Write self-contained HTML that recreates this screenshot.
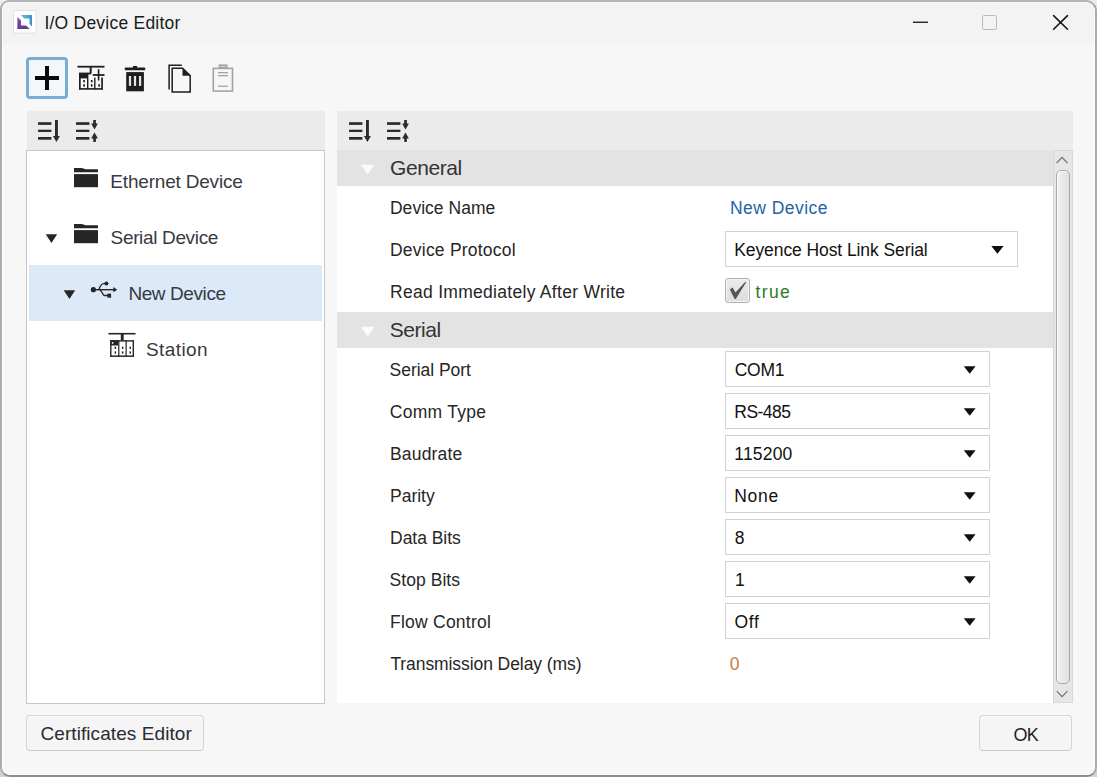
<!DOCTYPE html>
<html><head><meta charset="utf-8">
<style>
html,body{margin:0;padding:0;}
body{width:1097px;height:777px;position:relative;overflow:hidden;background:#d2d2d2;font-family:"Liberation Sans",sans-serif;}
.a{position:absolute;}
.t{position:absolute;white-space:nowrap;line-height:20px;font-size:17.5px;color:#262626;}
.tr{position:absolute;white-space:nowrap;line-height:20px;font-size:19px;color:#363a42;}
.dd{position:absolute;box-sizing:border-box;height:36px;border:1px solid #d2d2d2;background:#fff;}
</style></head><body>
<!-- window frame -->
<div class="a" style="left:0;top:0;width:12px;height:12px;background:#efefef"></div>
<div class="a" style="left:1083px;top:0;width:14px;height:14px;background:#ededed"></div>
<div class="a" style="left:0;top:0;width:1097px;height:777px;box-sizing:border-box;border-style:solid;border-width:2px;border-color:#b5b5b5 #a9a9a9 #8c8c8c #adadad;border-radius:9px 11px 10px 10px;background:#f7f7f7;overflow:hidden;">
  <div class="a" style="left:0;top:0;right:0;bottom:0;border-style:solid;border-width:1px 1px 1px 1px;border-color:#f8f8f8 #fdfdfd #fff #fff;border-radius:7px 9px 8px 8px;"></div>
  <div class="a" style="left:1px;top:1px;width:1091px;height:41px;background:#f3f3f3;border-radius:6px 8px 0 0"></div>
</div>

<!-- panel backgrounds -->
<div class="a" style="left:27px;top:111px;width:298px;height:39px;background:#ebebeb"></div>
<div class="a" style="left:26px;top:150px;width:299px;height:554px;box-sizing:border-box;border:1px solid #c6c6c6;background:#fff"></div>
<div class="a" style="left:29px;top:265px;width:293px;height:56px;background:#dbe9f9"></div>

<div class="a" style="left:337px;top:111px;width:736px;height:39px;background:#ebebeb"></div>
<div class="a" style="left:337px;top:150px;width:716px;height:553px;background:#fff"></div>
<div class="a" style="left:337px;top:150px;width:716px;height:36px;background:#e3e3e3"></div>
<div class="a" style="left:337px;top:312px;width:716px;height:36px;background:#e3e3e3"></div>

<!-- scrollbar -->
<div class="a" style="left:1053px;top:150px;width:20px;height:553px;box-sizing:border-box;background:#e6e6e6;border:1px solid #d8d8d8"></div>
<div class="a" style="left:1056px;top:170px;width:14px;height:514px;box-sizing:border-box;border:1px solid #a9a9a9;border-radius:5px;background:linear-gradient(90deg,#f2f2f2,#e0e0e0);box-shadow:inset 1px 1px 0 #fcfcfc"></div>

<!-- dropdowns -->
<div class="dd" style="left:725px;top:231px;width:293px"></div>
<div class="dd" style="left:725px;top:351px;width:265px"></div>
<div class="dd" style="left:725px;top:393px;width:265px"></div>
<div class="dd" style="left:725px;top:435px;width:265px"></div>
<div class="dd" style="left:725px;top:477px;width:265px"></div>
<div class="dd" style="left:725px;top:519px;width:265px"></div>
<div class="dd" style="left:725px;top:561px;width:265px"></div>
<div class="dd" style="left:725px;top:603px;width:265px"></div>

<!-- checkbox -->
<div class="a" style="left:725px;top:278px;width:25px;height:25px;box-sizing:border-box;border:1px solid #b0b0b0;border-radius:3px;background:linear-gradient(#ececec,#dcdcdc);box-shadow:inset 0 0 0 1px #f6f6f6"></div>

<!-- buttons -->
<div class="a" style="left:26px;top:715px;width:178px;height:36px;box-sizing:border-box;border:1px solid #d5d5d5;border-bottom-color:#cbcbcb;border-radius:4px;background:#f5f5f5;box-shadow:inset 0 1px 0 #fbfbfb"></div>
<div class="a" style="left:979px;top:715px;width:93px;height:36px;box-sizing:border-box;border:1px solid #d5d5d5;border-bottom-color:#cbcbcb;border-radius:4px;background:#f5f5f5;box-shadow:inset 0 1px 0 #fbfbfb"></div>

<!-- toolbar + button -->
<div class="a" style="left:26px;top:57px;width:42px;height:42px;box-sizing:border-box;border:3px solid #78acd4;border-radius:4px;background:#f4f7fa"></div>

<svg class="a" style="left:0;top:0" width="1097" height="777">
  <defs>
    <linearGradient id="gp" x1="0" y1="0" x2="0" y2="1"><stop offset="0" stop-color="#8a4fb0"/><stop offset="1" stop-color="#5b3d8f"/></linearGradient>
    <linearGradient id="gb" x1="0" y1="0" x2="1" y2="0"><stop offset="0" stop-color="#5fc3e4"/><stop offset="1" stop-color="#3a8fc8"/></linearGradient>
  </defs>
  <!-- app icon -->
  <rect x="13.5" y="10.5" width="22.6" height="22.6" rx="2" fill="#fff" stroke="#e0e0e0"/>
  <path d="M17.4,17 L21,20.5 L21,25.5 L26,25.5 L29.8,29 L17.4,29 Z" fill="url(#gp)"/>
  <path d="M20.8,15 L32,15 L32,26.5 L29.5,24 L29.5,18.5 L24.3,18.5 Z" fill="url(#gb)"/>
  <!-- window controls -->
  <rect x="913" y="21.6" width="15" height="1.3" fill="#111"/>
  <rect x="982.5" y="15.5" width="14" height="14" rx="2" fill="none" stroke="#b9b9b9"/>
  <path d="M1053.6,15.6 L1067.5,29.2 M1067.5,15.6 L1053.6,29.2" stroke="#111" stroke-width="1.5" stroke-linecap="round"/>

  <!-- plus -->
  <rect x="35" y="76" width="24" height="4" fill="#0a0a0a"/>
  <rect x="45" y="66" width="4" height="24" fill="#0a0a0a"/>

  <!-- station add -->
  <g fill="#1e1e1e">
    <rect x="77.5" y="65.8" width="27" height="1.8"/>
    <rect x="89.7" y="66.5" width="2" height="6.5"/>
    <rect x="79" y="72.6" width="12.2" height="1.8"/>
    <rect x="79" y="73.5" width="8.5" height="4.9"/>
    <rect x="79" y="73" width="1.7" height="16.6"/>
    <rect x="79" y="88.1" width="23.8" height="1.6"/>
    <rect x="101.2" y="77.5" width="1.7" height="12"/>
    <rect x="87" y="73.5" width="1.4" height="15.5"/>
    <rect x="94.1" y="77.6" width="1.4" height="11.5"/>
    <rect x="92.7" y="74.1" width="11.8" height="1.8"/>
    <rect x="97.8" y="69.2" width="1.6" height="11.3"/>
    <rect x="83.3" y="80" width="1.6" height="2.3"/>
    <rect x="83.3" y="84.2" width="1.6" height="2.5"/>
    <rect x="90.9" y="80" width="1.6" height="2.3"/>
    <rect x="90.9" y="84.2" width="1.6" height="2.5"/>
    <rect x="98.3" y="84.2" width="1.6" height="2.5"/>
  </g>

  <!-- trash -->
  <g fill="#1e1e1e">
    <rect x="133" y="66" width="4.1" height="2"/>
    <rect x="124.7" y="67.6" width="20.6" height="2.6" rx="1"/>
    <rect x="126.2" y="72.1" width="17.7" height="19.2"/>
  </g>
  <g fill="#e6e6e6">
    <rect x="128.9" y="76" width="2.2" height="9.9"/>
    <rect x="133.9" y="76" width="2.2" height="9.9"/>
    <rect x="139" y="76" width="2.2" height="9.9"/>
  </g>

  <!-- copy -->
  <g fill="none" stroke="#1e1e1e" stroke-width="1.5">
    <path d="M169.1,89.6 L169.1,65.2 L181.8,65.2"/>
    <path d="M182.6,68.3 L172.2,68.3 L172.2,91.9 L190.2,91.9 L190.2,75.6 Z"/>
  </g>
  <path d="M182.5,68.3 L182.5,75.8 L190.2,75.8 Z" fill="#1e1e1e"/>

  <!-- paste disabled -->
  <g fill="none" stroke="#a3a3a3" stroke-width="1.6">
    <rect x="213.3" y="68.4" width="19.2" height="22.7"/>
    <rect x="219.5" y="65.2" width="7.3" height="2.2"/>
  </g>
  <g fill="#a3a3a3">
    <rect x="218" y="72" width="10" height="1.3"/>
    <rect x="218" y="75" width="10" height="1.3"/>
    <rect x="218" y="85.6" width="10" height="1.3"/>
  </g>

  <!-- sort icons left -->
  <g fill="#2b2b2b" id="sorticons">
    <rect x="38.05" y="122.2" width="13.35" height="2.7"/>
    <rect x="38.05" y="129.7" width="13.35" height="2.3"/>
    <rect x="38.05" y="137" width="13.35" height="2.7"/>
    <rect x="55" y="120" width="2.9" height="17"/>
    <path d="M52.9,136.1 L59.9,136.1 L56.45,141.9 Z"/>
    <rect x="76.05" y="122.2" width="13.35" height="2.7"/>
    <rect x="76.05" y="129.7" width="13.35" height="2.3"/>
    <rect x="76.05" y="137" width="13.35" height="2.7"/>
    <rect x="93.2" y="120" width="2.7" height="4.5"/>
    <path d="M91.1,123.5 L97.9,123.5 L94.5,129.5 Z"/>
    <path d="M91.1,138.6 L97.9,138.6 L94.5,132.4 Z"/>
    <rect x="93.2" y="138" width="2.7" height="3.9"/>
  </g>
  <use href="#sorticons" x="311" y="0"/>

  <!-- group triangles -->
  <path d="M360.8,164.8 L374.5,164.8 L367.7,174.5 Z" fill="#fbfbfb"/>
  <path d="M360.8,326.8 L374.5,326.8 L367.7,336.5 Z" fill="#fbfbfb"/>

  <!-- tree icons -->
  <g fill="#262626">
    <path d="M74,168 L81.6,168 L86,169.2 L98,169.2 L98,172.2 L74,172.2 Z"/>
    <rect x="74" y="174.1" width="24" height="13.1"/>
    <path d="M74,224 L81.6,224 L86,225.2 L98,225.2 L98,228.2 L74,228.2 Z"/>
    <rect x="74" y="230.1" width="24" height="13.1"/>
    <path d="M45.7,234.3 L57.2,234.3 L51.45,243 Z"/>
    <path d="M63.7,290.3 L75.2,290.3 L69.45,299 Z"/>
  </g>
  <!-- usb -->
  <g fill="#262626" stroke="#262626">
    <circle cx="93.4" cy="289.7" r="2.6" stroke="none"/>
    <path d="M93.4,289.7 L114,289.7" stroke-width="1.4" fill="none"/>
    <path d="M113.3,287 L117.3,289.7 L113.3,292.2 Z" stroke="none"/>
    <path d="M98.8,289.7 Q101,283.6 103.5,283.6 L106,283.6" stroke-width="1.3" fill="none"/>
    <circle cx="106.4" cy="283.5" r="2" stroke="none"/>
    <path d="M100,289.7 L104,295.5 L108,295.5" stroke-width="1.3" fill="none"/>
    <rect x="107.4" y="293.6" width="3.7" height="4.1" stroke="none"/>
  </g>
  <!-- station -->
  <g fill="#262626">
    <rect x="108.4" y="332.9" width="27.1" height="1.6"/>
    <rect x="120.8" y="334" width="2.9" height="6.7"/>
    <rect x="110.1" y="340.2" width="23.9" height="1.4"/>
    <rect x="110.1" y="355.4" width="23.9" height="1.5"/>
    <rect x="110.1" y="340.2" width="1.4" height="16.7"/>
    <rect x="132.6" y="340.2" width="1.4" height="16.7"/>
    <rect x="118.2" y="340.2" width="1.2" height="16.7"/>
    <rect x="125.5" y="340.2" width="1.2" height="16.7"/>
    <path d="M110.1,340.2 L118.3,340.2 L118.3,345.5 L110.1,345.5 Z M111.7,342 L111.7,343.7 L113.3,343.7 L113.3,342 Z" fill-rule="evenodd"/>
    <rect x="114.6" y="346.7" width="1.5" height="2.2"/>
    <rect x="114.6" y="351.4" width="1.5" height="2.2"/>
    <rect x="121.9" y="346.7" width="1.5" height="2.2"/>
    <rect x="121.9" y="351.4" width="1.5" height="2.2"/>
    <rect x="129.5" y="346.7" width="1.5" height="2.2"/>
    <rect x="129.5" y="351.4" width="1.5" height="2.2"/>
  </g>

  <!-- scrollbar arrows -->
  <path d="M1056.6,163 L1062,157.4 L1067.4,163" fill="none" stroke="#707070" stroke-width="1.15"/>
  <path d="M1056.8,691.2 L1062.1,696.6 L1067.4,691.2" fill="none" stroke="#707070" stroke-width="1.15"/>

  <!-- dropdown arrows -->
  <g fill="#0f0f0f">
    <path d="M991.3,246 L1003.6,246 L997.45,253.8 Z"/>
    <path d="M963.8,366.2 L975.6,366.2 L969.7,373.8 Z"/>
    <path d="M963.8,408.2 L975.6,408.2 L969.7,415.8 Z"/>
    <path d="M963.8,450.2 L975.6,450.2 L969.7,457.8 Z"/>
    <path d="M963.8,492.2 L975.6,492.2 L969.7,499.8 Z"/>
    <path d="M963.8,534.2 L975.6,534.2 L969.7,541.8 Z"/>
    <path d="M963.8,576.2 L975.6,576.2 L969.7,583.8 Z"/>
    <path d="M963.8,618.2 L975.6,618.2 L969.7,625.8 Z"/>
  </g>
  <!-- checkmark -->
  <path d="M729.8,289.6 L732.6,287.6 L735.5,292.6 L745.6,281.4 L746,282.4 L735.8,298.9 L734.6,298.9 Z" fill="#555"/>
</svg>

<!-- texts -->
<div id="x1" class="t" style="left:44.45px;top:12.71px;color:#1a1a1a;letter-spacing:0.227px">I/O Device Editor</div>

<div id="x2" class="tr" style="left:110.36px;top:172.00px;letter-spacing:-0.197px">Ethernet Device</div>
<div id="x3" class="tr" style="left:110.59px;top:228.00px;letter-spacing:-0.346px">Serial Device</div>
<div id="x4" class="tr" style="left:128.39px;top:284.00px;letter-spacing:-0.410px">New Device</div>
<div id="x5" class="tr" style="left:146.04px;top:340.01px;letter-spacing:0.393px">Station</div>

<div id="x6" class="t" style="left:390.05px;top:156.00px;font-size:21px;line-height:24px;color:#333333;letter-spacing:-0.424px">General</div>
<div id="x7" class="t" style="left:389.73px;top:317.50px;font-size:21px;line-height:24px;color:#333333;letter-spacing:-0.468px">Serial</div>

<div id="x8" class="t" style="left:389.94px;top:198.00px;letter-spacing:0.035px">Device Name</div>
<div id="x9" class="t" style="left:390.02px;top:240.00px;letter-spacing:0.216px">Device Protocol</div>
<div id="x10" class="t" style="left:390.07px;top:282.00px;letter-spacing:0.287px">Read Immediately After Write</div>
<div id="x11" class="t" style="left:389.61px;top:360.00px;letter-spacing:-0.046px">Serial Port</div>
<div id="x12" class="t" style="left:389.73px;top:402.00px;letter-spacing:0.271px">Comm Type</div>
<div id="x13" class="t" style="left:390.02px;top:444.00px;letter-spacing:0.160px">Baudrate</div>
<div id="x14" class="t" style="left:390.02px;top:486.00px;letter-spacing:-0.014px">Parity</div>
<div id="x15" class="t" style="left:390.02px;top:528.00px;letter-spacing:-0.027px">Data Bits</div>
<div id="x16" class="t" style="left:389.61px;top:570.00px;letter-spacing:0.043px">Stop Bits</div>
<div id="x17" class="t" style="left:390.02px;top:612.00px;letter-spacing:0.236px">Flow Control</div>
<div id="x18" class="t" style="left:390.38px;top:654.00px;letter-spacing:-0.079px">Transmission Delay (ms)</div>

<div id="x19" class="t" style="left:730.00px;top:198.00px;color:#1f63a6;letter-spacing:0.457px">New Device</div>
<div id="x20" class="t" style="left:734.23px;top:240.00px;color:#111;letter-spacing:-0.088px">Keyence Host Link Serial</div>
<div id="x21" class="t" style="left:755.40px;top:281.50px;color:#2e7a27;letter-spacing:1.418px">true</div>
<div id="x22" class="t" style="left:734.73px;top:360.00px;color:#111;letter-spacing:-0.291px">COM1</div>
<div id="x23" class="t" style="left:734.29px;top:402.00px;color:#111;letter-spacing:-0.544px">RS-485</div>
<div id="x24" class="t" style="left:734.32px;top:444.00px;color:#111;letter-spacing:0.181px">115200</div>
<div id="x25" class="t" style="left:734.29px;top:486.00px;color:#111;letter-spacing:0.675px">None</div>
<div id="x26" class="t" style="left:734.87px;top:528.00px;color:#111">8</div>
<div id="x27" class="t" style="left:735.10px;top:570.00px;color:#111">1</div>
<div id="x28" class="t" style="left:734.50px;top:612.00px;color:#111;letter-spacing:0.683px">Off</div>
<div id="x29" class="t" style="left:729.72px;top:653.71px;color:#c9783c">0</div>

<div id="x30" class="t" style="left:40.45px;top:723.01px;font-size:19px;line-height:22px;color:#2a2a33;letter-spacing:0.079px">Certificates Editor</div>
<div id="x31" class="t" style="left:1013.46px;top:723.60px;font-size:18px;line-height:22px;color:#1f1f1f;letter-spacing:-0.740px">OK</div>
</body></html>
